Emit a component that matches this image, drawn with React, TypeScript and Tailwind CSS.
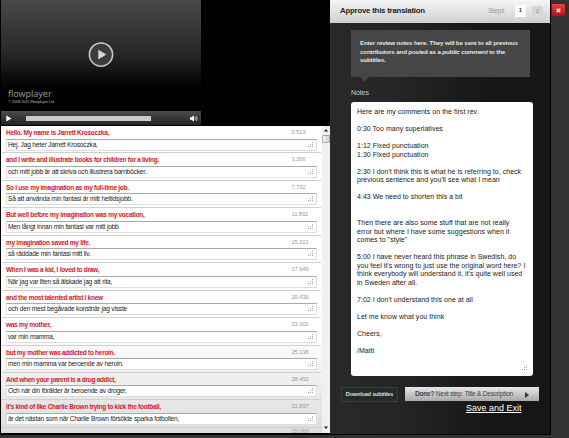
import React from "react";

type Cue = { source: string; target: string; time: string };

const cues: Cue[] = [
  { source: "Hello. My name is Jarrett Krosoczka,", target: "Hej, Jag heter Jarrett Krosoczka,", time: "0.513" },
  { source: "and I write and illustrate books for children for a living.", target: "och mitt jobb är att skriva och illustrera barnböcker.", time: "3.266" },
  { source: "So I use my imagination as my full-time job.", target: "Så att använda min fantasi är mitt heltidsjobb.", time: "7.732" },
  { source: "But well before my imagination was my vocation,", target: "Men långt innan min fantasi var mitt jobb", time: "11.892" },
  { source: "my imagination saved my life.", target: "så räddade min fantasi mitt liv.", time: "15.221" },
  { source: "When I was a kid, I loved to draw,", target: "När jag var liten så älskade jag att rita,", time: "17.949" },
  { source: "and the most talented artist I knew", target: "och den mest begåvade konstnär jag visste", time: "20.436" },
  { source: "was my mother,", target: "var min mamma,", time: "23.302" },
  { source: "but my mother was addicted to heroin.", target: "men min mamma var beroende av heroin.", time: "25.136" },
  { source: "And when your parent is a drug addict,", target: "Och när din förälder är beroende av droger,", time: "28.452" },
  { source: "it's kind of like Charlie Brown trying to kick the football,", target: "är det nästan som när Charlie Brown försökte sparka fotbollen,", time: "31.897" },
];

const notes = [
  "Here are my comments on the first rev.",
  "",
  "0:30 Too many superlatives",
  "",
  "1:12 Fixed punctuation",
  "1:30 Fixed punctuation",
  "",
  "2:30 I don't think this is what he is referring to, check",
  "previous sentence and you'll see what I mean",
  "",
  "4:43 We need to shorten this a bit",
  "",
  "",
  "Then there are also some stuff that are not really",
  "error but where I have some suggestions when it",
  'comes to "style"',
  "",
  "5:00 I have never heard this phrase in Swedish, do",
  "you feel it's wrong to just use the original word here? I",
  "think everybody will understand it, it's quite well used",
  "in Sweden after all.",
  "",
  "7:02 I don't understand this one at all",
  "",
  "Let me know what you think",
  "",
  "Cheers,",
  "",
  "/Matti",
];

function Grip() {
  return (
    <svg className="h-[6px] w-[6px] shrink-0" viewBox="0 0 6 6" fill="#a4a4a4" shapeRendering="crispEdges">
      <path d="M4 0h1v1h-1zM2 2h1v1h-1zM4 2h1v1h-1zM0 4h1v1h-1zM2 4h1v1h-1zM4 4h1v1h-1z" />
    </svg>
  );
}

function Player() {
  return (
    <div className="flex h-[126px] bg-black pl-px">
      <div className="flex w-[200px] flex-col">
        <div className="flex h-[111px] flex-col bg-linear-to-b from-[#494949] via-[#272727] via-50% to-black to-95%">
          <div className="flex h-[85px] items-end justify-center pb-[17px]">
            <svg className="h-[26px] w-[26px]" viewBox="0 0 26 26">
              <circle cx="13" cy="12.6" r="11.6" fill="#3c3c3c" stroke="#c9c9c9" strokeWidth="1.6" />
              <path d="M10.3 7.8v9.6l8-4.8z" fill="#d8d8d8" />
            </svg>
          </div>
          <div className="pl-[7px] font-['Noto_Sans',sans-serif] text-[9px] leading-[18px] tracking-[-0.05px] whitespace-nowrap text-[#929292]">flowplayer</div>
          <div className="-mt-[4px] pl-[7px] text-[4.2px] leading-[6px] tracking-[-0.25px] whitespace-nowrap text-[#a8a8a8]">© 2008-2011 Flowplayer Ltd</div>
        </div>
        <div className="flex h-[14px] items-center bg-linear-to-b from-[#4c4c4c] to-[#242424] pl-[5px]">
          <svg className="h-[7px] w-[6px]" viewBox="0 0 6 7">
            <path d="M.3.4v6.2L5.4 3.5z" fill="#fff" />
          </svg>
          <div className="ml-[14px] h-[5px] w-[125px] bg-[#cbcbcb]" />
          <svg className="ml-[39px] h-[7px] w-[8px]" viewBox="0 0 8 7">
            <path d="M0 2.2h1.6L4 .3v6.4L1.6 4.8H0z" fill="#fff" />
            <path d="M5 2q1 1.5 0 3M6.3 1q1.8 2.5 0 5" fill="none" stroke="#ddd" strokeWidth=".8" />
          </svg>
        </div>
      </div>
    </div>
  );
}

function CueRow({ cue }: { cue: Cue }) {
  return (
    <div className="h-[27.45px] shrink-0 border-b border-[#cfcfcf] pr-[4px] pl-[4px]">
      <div className="flex h-[12.5px] justify-between">
        <span className="pt-px text-[6.5px] leading-[12px] font-bold tracking-[-0.28px] whitespace-nowrap text-[#d0202c]">{cue.source}</span>
        <span className="w-[25.5px] text-[5.8px] leading-[12px] tracking-[-0.1px] text-[#999]">{cue.time}</span>
      </div>
      <div className="flex h-[12px] items-center justify-between border border-[#dedede] border-t-[#aaa] bg-white pr-[2px] pl-px">
        <span className="text-[6.6px] leading-[10px] tracking-[-0.19px] whitespace-nowrap text-[#222]">{cue.target}</span>
        <Grip />
      </div>
    </div>
  );
}

function SubtitleList() {
  return (
    <div className="ml-px flex h-[307px] w-[329px] overflow-hidden bg-white">
      <div className="flex w-[321px] flex-col overflow-hidden bg-linear-to-b from-white from-68% to-[#dcdcdc] px-px">
        {cues.map((cue) => (
          <CueRow key={cue.time} cue={cue} />
        ))}
        <div className="flex h-[5px] shrink-0 justify-end pr-[4px]">
          <span className="w-[25.5px] text-[5.8px] leading-[7px] tracking-[-0.1px] text-[#aaa]">35.066</span>
        </div>
      </div>
      <div className="flex w-[8px] flex-col items-center justify-between bg-[#f0f0f0]">
        <div className="flex flex-col items-center">
          <svg className="mt-[3px] h-[3px] w-[4px]" viewBox="0 0 4 3"><path d="M2 0l2 2.6H0z" fill="#222" /></svg>
          <div className="mt-[3px] h-[8px] w-[8px] rounded-[1px] border border-[#a8a8a8] bg-linear-to-r from-[#f4f4f4] to-[#cfcfcf]" />
        </div>
        <svg className="mb-[4px] h-[3px] w-[4px]" viewBox="0 0 4 3"><path d="M2 3L0 .4h4z" fill="#222" /></svg>
      </div>
    </div>
  );
}

function ReviewPanel() {
  return (
    <div className="flex h-[434px] w-[221px] flex-col border-r border-black bg-linear-to-r from-[#292929] via-[#252525] via-30% to-[#161616] to-75%">
      <div className="flex h-[23px] items-center bg-linear-to-b from-[#f6f6f6] to-[#cfcfcf] pl-[10px] text-[#999]">
        <h1 className="w-[148px] pb-[2px] text-[7.8px] font-bold tracking-[-0.2px] whitespace-nowrap text-[#222]">Approve this translation</h1>
        <span className="w-[27px] pb-[2px] text-[6.6px] tracking-[-0.1px]">Steps</span>
        <span className="mb-[2px] flex h-[12px] w-[11px] items-center justify-center bg-white text-[6px] font-bold text-[#333]">1</span>
        <span className="mb-[2px] ml-[6px] flex h-[9px] w-[11px] items-center justify-center bg-[#d4d4d4] text-[6px] leading-[8px] text-[#8f8f8f]">2</span>
      </div>
      <div className="mt-[7px] ml-[21px] h-[47px] w-[179px] bg-[#464646] pt-[9px] pl-[9px] text-[6.2px] leading-[8.5px] font-bold tracking-[-0.15px] whitespace-nowrap text-[#e6e6e6]">
        <div>Enter review notes here. They will be sent to all previous</div>
        <div>contributors and posted as a <i>public comment</i> to the</div>
        <div>subtitles.</div>
      </div>
      <svg className="ml-[30px] h-[5px] w-[9px]" viewBox="0 0 9 5"><path d="M0 0h9L4.5 4.5z" fill="#464646" /></svg>
      <div className="mt-[5px] ml-[21px] text-[7px] leading-[11px] tracking-[-0.1px] text-[#ccc]">Notes</div>
      <div className="mt-[4px] ml-[21px] flex h-[274px] w-[182px] items-end justify-between rounded-[3px] bg-white pr-[5px] pb-[5px] pl-[6px]">
        <div className="h-[263px] w-[164px] text-[7px] leading-[8.55px] tracking-[0.03px] whitespace-nowrap text-[#222]">
          {notes.map((line, i) => (
            <div key={i} className="h-[8.55px]">{line}</div>
          ))}
        </div>
        <Grip />
      </div>
      <div className="mt-[11px] ml-[11px] flex">
        <button className="h-[15px] w-[57px] border border-[#363e3c] bg-[#252b29] text-[5.6px] font-bold tracking-[-0.22px] whitespace-nowrap text-[#ddd]">Download subtitles</button>
        <button className="ml-[7px] flex h-[14px] w-[134px] items-center bg-linear-to-b from-[#e8e8e8] to-[#a9a9a9] pl-[10px] text-[6.6px] tracking-[-0.25px] whitespace-nowrap text-[#444]">
          <span className="w-[110px] text-left"><b>Done?</b> Next step: Title &amp; Description</span>
          <svg className="mt-px h-[6px] w-[4px]" viewBox="0 0 4 6"><path d="M0 0v6l4-3z" fill="#333" /></svg>
        </button>
      </div>
      <a className="ml-[136px] text-[9px] leading-[13px] whitespace-nowrap text-white underline">Save and Exit</a>
    </div>
  );
}

export default function App() {
  return (
    <div className="flex h-[438px] w-[569px] flex-col overflow-hidden bg-[#333] font-['Liberation_Sans',Arial,sans-serif]">
      <div className="flex h-[435px] shrink-0">
        <div className="w-[330px] bg-black">
          <Player />
          <SubtitleList />
        </div>
        <div className="border-b border-black">
          <ReviewPanel />
        </div>
        <button className="mt-[4px] ml-px flex h-[12px] w-[13px] items-center justify-center rounded-r-[2px] bg-linear-to-b from-[#ef3d43] to-[#b40f16]">
          <svg className="h-[5px] w-[5px]" viewBox="0 0 5 5"><path d="M.7.7l3.6 3.6M4.3.7L.7 4.3" stroke="#fff" strokeWidth="1.3" /></svg>
        </button>
      </div>
    </div>
  );
}
